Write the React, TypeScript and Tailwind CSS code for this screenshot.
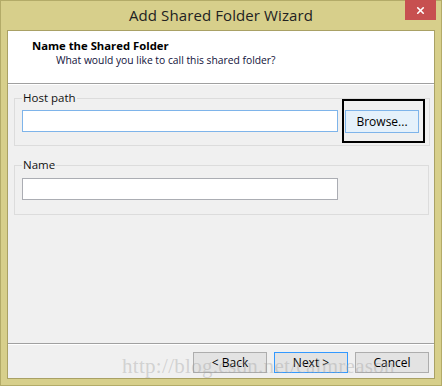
import { X } from 'lucide-react';

function WizButton({ label, primary }: { label: string; primary?: boolean }) {
  return (
    <button
      className={`w-[74px] h-[21px] text-[12px] leading-none text-black bg-[#e3e3e3] border ${
        primary ? 'border-[#3399ff]' : 'border-[#adadad]'
      }`}
    >
      {label}
    </button>
  );
}

export default function App() {
  return (
    <div className="relative w-[442px] h-[386px] bg-[#d7cf8b] border border-[#b3ab68] flex flex-col font-['Open_Sans',sans-serif] text-[#111]">
      {/* title bar */}
      <div className="relative h-[29px] flex items-center justify-center">
        <span className="text-[15px] text-[#222] tracking-[0.1px]">Add Shared Folder Wizard</span>
        <div className="absolute top-[-1px] right-[5px] w-[31px] h-[20px] bg-[#c75050] flex items-center justify-center">
          <X size={11} strokeWidth={3.5} className="text-white" />
        </div>
      </div>

      {/* client area */}
      <div className="flex-1 mx-[6px] mb-[6px] border border-[#a9a165] bg-[#f0f0f0] flex flex-col">
        <div className="h-[52px] bg-white pl-[24px] pt-[7px] leading-[15px]">
          <div className="text-[11.3px] font-bold text-black">Name the Shared Folder</div>
          <div className="pl-[24px] text-[10.3px] text-[#10103a]">What would you like to call this shared folder?</div>
        </div>
        <div className="border-t border-[#a0a0a0] border-b border-b-white" />

        <div className="flex-1 pl-[6px] pr-[5px] pt-[6px] text-[11.5px]">
          <fieldset className="border border-[#dcdcdc] pl-[7px] pr-[4px] pb-[2px]">
            <legend className="px-[1px] leading-[14px]">Host path</legend>
            <div className="flex items-center mt-[-6px]">
              <input className="w-[316px] h-[22px] bg-white border border-[#7eb4ea] outline-none" />
              <div className="ml-[4px] h-[44px] border-2 border-black pl-[1px] pr-[4px] pt-[9px]">
                <button className="w-[74px] h-[23px] bg-[#e5f1fb] border border-[#7eb4ea] text-[12px] leading-none text-black">
                  Browse...
                </button>
              </div>
            </div>
          </fieldset>

          <fieldset className="mt-[12px] border border-[#dcdcdc] pl-[7px] pb-[14px]">
            <legend className="px-[1px] leading-[14px]">Name</legend>
            <input className="mt-[6px] w-[316px] h-[22px] bg-white border border-[#abadb3] outline-none block" />
          </fieldset>
        </div>

        <div className="border-t border-[#a0a0a0] border-b border-b-white" />
        <div className="h-[33px] flex justify-end gap-[7px] pr-[5px] pt-[7px]">
          <WizButton label="< Back" />
          <WizButton label="Next >" primary />
          <WizButton label="Cancel" />
        </div>
      </div>

      {/* watermark */}
      <div className="absolute left-[121px] top-[350px] font-['Liberation_Serif',serif] text-[21px] text-[#a0a0a0]/40 pointer-events-none tracking-[0.3px]">
        http://blog.csdn.net/calmreason
      </div>
    </div>
  );
}
